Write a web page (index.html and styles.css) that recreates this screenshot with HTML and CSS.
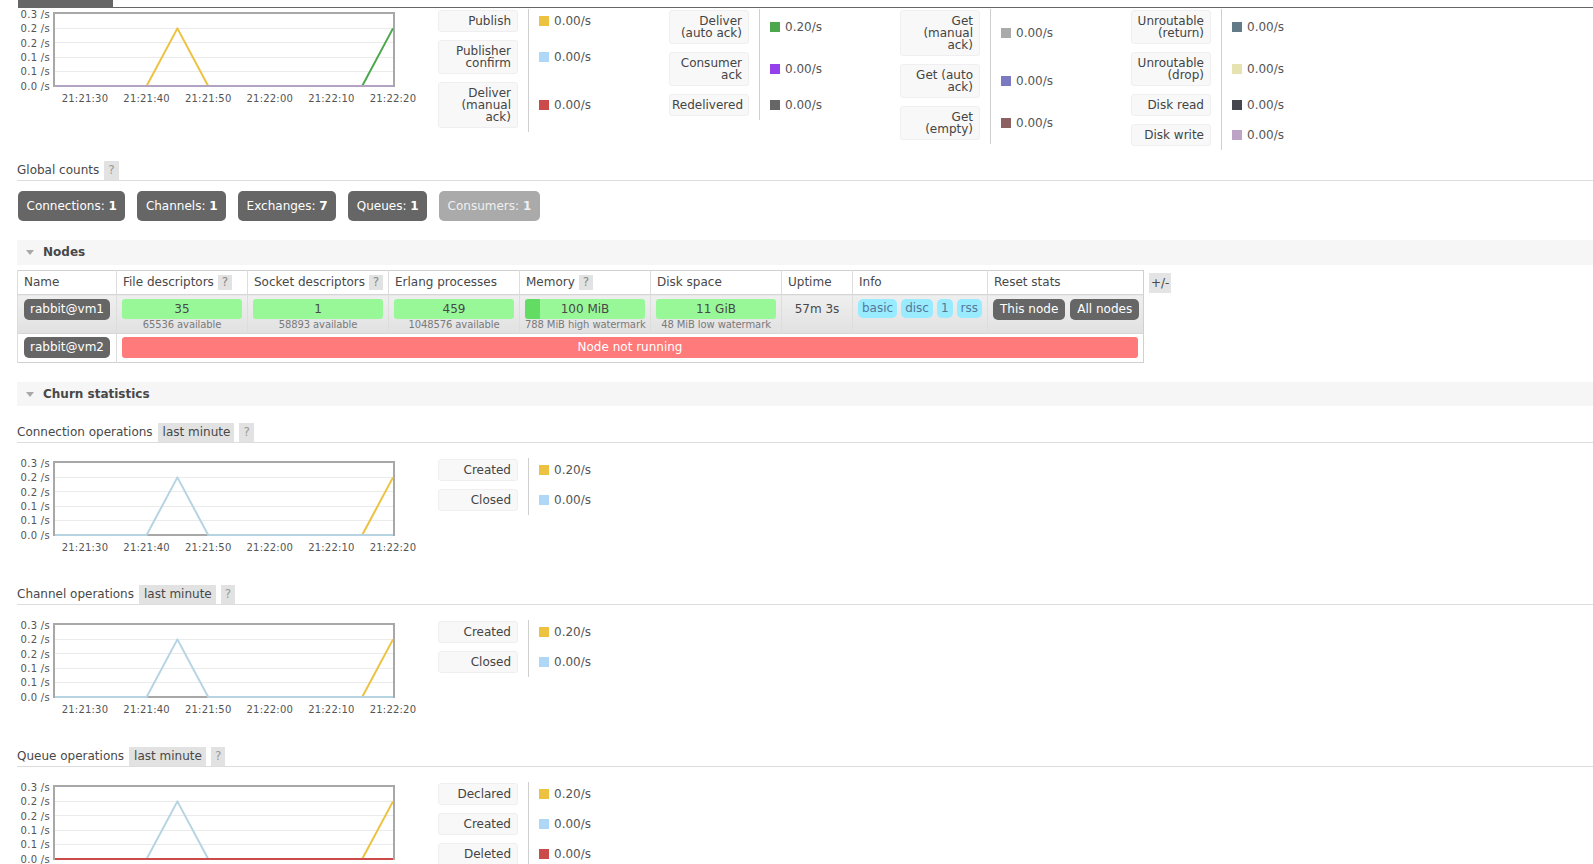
FILE: index.html
```html
<!DOCTYPE html>
<html>
<head>
<meta charset="utf-8">
<title>RabbitMQ Management</title>
<link rel="stylesheet" href="styles.css">
</head>
<body>
<div class="main">
  <div class="tabs"><div class="tab"></div></div>

  <div class="box">
    <svg class="chart" width="405" height="100" viewBox="0 0 405 100">
      <rect x="37" y="5" width="340" height="73" class="plot-bg"/>
      <g class="grid">
        <line x1="38" y1="20.5" x2="376" y2="20.5"/>
        <line x1="38" y1="34.5" x2="376" y2="34.5"/>
        <line x1="38" y1="49.5" x2="376" y2="49.5"/>
        <line x1="38" y1="63.5" x2="376" y2="63.5"/>
      </g>
      <rect x="37" y="5" width="340" height="73" class="plot-border"/>
      <g class="ylab">
        <text x="33" y="9.5">0.3 /s</text>
        <text x="33" y="24">0.2 /s</text>
        <text x="33" y="38.5">0.2 /s</text>
        <text x="33" y="53">0.1 /s</text>
        <text x="33" y="67">0.1 /s</text>
        <text x="33" y="81.5">0.0 /s</text>
      </g>
      <g class="xlab">
        <text x="68" y="93.5">21:21:30</text>
        <text x="129.6" y="93.5">21:21:40</text>
        <text x="191.2" y="93.5">21:21:50</text>
        <text x="252.8" y="93.5">21:22:00</text>
        <text x="314.4" y="93.5">21:22:10</text>
        <text x="376" y="93.5">21:22:20</text>
      </g>
      <polyline class="s s-yellow" points="129.6,78 160.4,20.4 191.2,78"/>
      <polyline class="s s-green" points="345.2,78 376,20.4"/>
      <polyline class="s s-diskwrite" points="38,78 376,78"/>
    </svg>
    <div class="legends">
      <div class="legend">
        <div class="sep sep3"></div>
        <div class="lab">Publish</div>
        <div class="val"><span class="sw c-yellow"></span>0.00/s</div>
        <div class="lab">Publisher<br>confirm</div>
        <div class="val"><span class="sw c-lblue"></span>0.00/s</div>
        <div class="lab">Deliver<br>(manual<br>ack)</div>
        <div class="val"><span class="sw c-red"></span>0.00/s</div>
      </div>
      <div class="legend">
        <div class="sep sep3"></div>
        <div class="lab">Deliver<br>(auto ack)</div>
        <div class="val"><span class="sw c-green"></span>0.20/s</div>
        <div class="lab">Consumer<br>ack</div>
        <div class="val"><span class="sw c-purple"></span>0.00/s</div>
        <div class="lab">Redelivered</div>
        <div class="val"><span class="sw c-dgray"></span>0.00/s</div>
      </div>
      <div class="legend">
        <div class="sep sep3"></div>
        <div class="lab">Get<br>(manual<br>ack)</div>
        <div class="val"><span class="sw c-lgray"></span>0.00/s</div>
        <div class="lab">Get (auto<br>ack)</div>
        <div class="val"><span class="sw c-violet"></span>0.00/s</div>
        <div class="lab">Get<br>(empty)</div>
        <div class="val"><span class="sw c-brown"></span>0.00/s</div>
      </div>
      <div class="legend">
        <div class="sep sep4"></div>
        <div class="lab">Unroutable<br>(return)</div>
        <div class="val"><span class="sw c-slate"></span>0.00/s</div>
        <div class="lab">Unroutable<br>(drop)</div>
        <div class="val"><span class="sw c-pale"></span>0.00/s</div>
        <div class="lab">Disk read</div>
        <div class="val"><span class="sw c-dark"></span>0.00/s</div>
        <div class="lab">Disk write</div>
        <div class="val"><span class="sw c-lilac"></span>0.00/s</div>
      </div>
    </div>
  </div>

  <h3 class="h-global"><span class="title">Global counts</span><span class="help">?</span></h3>

  <div class="counts">
    <span class="count">Connections: <b>1</b></span>
    <span class="count">Channels: <b>1</b></span>
    <span class="count">Exchanges: <b>7</b></span>
    <span class="count">Queues: <b>1</b></span>
    <span class="count off">Consumers: <b>1</b></span>
  </div>

  <div class="section sec-nodes"><span class="tri"></span>Nodes</div>

  <div class="nodes">
    <table class="list">
      <colgroup>
        <col class="w-name"><col class="w-fd"><col class="w-sd"><col class="w-ep"><col class="w-mem"><col class="w-disk"><col class="w-up"><col class="w-info"><col class="w-reset">
      </colgroup>
      <thead>
        <tr>
          <th>Name</th>
          <th>File descriptors <span class="help">?</span></th>
          <th>Socket descriptors <span class="help">?</span></th>
          <th>Erlang processes</th>
          <th>Memory <span class="help">?</span></th>
          <th>Disk space</th>
          <th>Uptime</th>
          <th>Info</th>
          <th>Reset stats</th>
        </tr>
      </thead>
      <tbody>
        <tr class="alt1">
          <td><span class="node">rabbit@vm1</span></td>
          <td><div class="bar">35</div><div class="sub">65536 available</div></td>
          <td><div class="bar">1</div><div class="sub">58893 available</div></td>
          <td><div class="bar">459</div><div class="sub">1048576 available</div></td>
          <td><div class="bar mem">100 MiB</div><div class="sub">788 MiB high watermark</div></td>
          <td><div class="bar">11 GiB</div><div class="sub">48 MiB low watermark</div></td>
          <td class="center"><div class="uptime">57m 3s</div></td>
          <td><div class="badges"><span class="badge">basic</span><span class="badge">disc</span><span class="badge">1</span><span class="badge">rss</span></div></td>
          <td><div class="btns"><span class="btn">This node</span><span class="btn">All nodes</span></div></td>
        </tr>
        <tr class="alt2">
          <td><span class="node">rabbit@vm2</span></td>
          <td colspan="8"><div class="bar red">Node not running</div></td>
        </tr>
      </tbody>
    </table>
    <span class="pm">+/-</span>
  </div>

  <div class="section sec-churn"><span class="tri"></span>Churn statistics</div>

  <h3 class="h-sub first"><span class="title">Connection operations</span><span class="period">last minute</span><span class="help">?</span></h3>
  <div class="box sub-box">
    <svg class="chart" width="405" height="100" viewBox="0 0 405 100">
      <rect x="37" y="5" width="340" height="73" class="plot-bg"/>
      <g class="grid">
        <line x1="38" y1="20.5" x2="376" y2="20.5"/>
        <line x1="38" y1="34.5" x2="376" y2="34.5"/>
        <line x1="38" y1="49.5" x2="376" y2="49.5"/>
        <line x1="38" y1="63.5" x2="376" y2="63.5"/>
      </g>
      <rect x="37" y="5" width="340" height="73" class="plot-border"/>
      <g class="ylab">
        <text x="33" y="9.5">0.3 /s</text>
        <text x="33" y="24">0.2 /s</text>
        <text x="33" y="38.5">0.2 /s</text>
        <text x="33" y="53">0.1 /s</text>
        <text x="33" y="67">0.1 /s</text>
        <text x="33" y="81.5">0.0 /s</text>
      </g>
      <g class="xlab">
        <text x="68" y="93.5">21:21:30</text>
        <text x="129.6" y="93.5">21:21:40</text>
        <text x="191.2" y="93.5">21:21:50</text>
        <text x="252.8" y="93.5">21:22:00</text>
        <text x="314.4" y="93.5">21:22:10</text>
        <text x="376" y="93.5">21:22:20</text>
      </g>
      <polyline class="s s-yellow" points="345.2,78 376,20.4"/>
      <polyline class="s s-lblue" points="38,78 129.6,78 160.4,20.4 191.2,78 376,78"/>
    </svg>
    <div class="legends">
      <div class="legend">
        <div class="sep sep2"></div>
        <div class="lab">Created</div>
        <div class="val"><span class="sw c-yellow"></span>0.20/s</div>
        <div class="lab">Closed</div>
        <div class="val"><span class="sw c-lblue"></span>0.00/s</div>
      </div>
    </div>
  </div>

  <h3 class="h-sub"><span class="title">Channel operations</span><span class="period">last minute</span><span class="help">?</span></h3>
  <div class="box sub-box">
    <svg class="chart" width="405" height="100" viewBox="0 0 405 100">
      <rect x="37" y="5" width="340" height="73" class="plot-bg"/>
      <g class="grid">
        <line x1="38" y1="20.5" x2="376" y2="20.5"/>
        <line x1="38" y1="34.5" x2="376" y2="34.5"/>
        <line x1="38" y1="49.5" x2="376" y2="49.5"/>
        <line x1="38" y1="63.5" x2="376" y2="63.5"/>
      </g>
      <rect x="37" y="5" width="340" height="73" class="plot-border"/>
      <g class="ylab">
        <text x="33" y="9.5">0.3 /s</text>
        <text x="33" y="24">0.2 /s</text>
        <text x="33" y="38.5">0.2 /s</text>
        <text x="33" y="53">0.1 /s</text>
        <text x="33" y="67">0.1 /s</text>
        <text x="33" y="81.5">0.0 /s</text>
      </g>
      <g class="xlab">
        <text x="68" y="93.5">21:21:30</text>
        <text x="129.6" y="93.5">21:21:40</text>
        <text x="191.2" y="93.5">21:21:50</text>
        <text x="252.8" y="93.5">21:22:00</text>
        <text x="314.4" y="93.5">21:22:10</text>
        <text x="376" y="93.5">21:22:20</text>
      </g>
      <polyline class="s s-yellow" points="345.2,78 376,20.4"/>
      <polyline class="s s-lblue" points="38,78 129.6,78 160.4,20.4 191.2,78 376,78"/>
    </svg>
    <div class="legends">
      <div class="legend">
        <div class="sep sep2"></div>
        <div class="lab">Created</div>
        <div class="val"><span class="sw c-yellow"></span>0.20/s</div>
        <div class="lab">Closed</div>
        <div class="val"><span class="sw c-lblue"></span>0.00/s</div>
      </div>
    </div>
  </div>

  <h3 class="h-sub"><span class="title">Queue operations</span><span class="period">last minute</span><span class="help">?</span></h3>
  <div class="box sub-box">
    <svg class="chart" width="405" height="100" viewBox="0 0 405 100">
      <rect x="37" y="5" width="340" height="73" class="plot-bg"/>
      <g class="grid">
        <line x1="38" y1="20.5" x2="376" y2="20.5"/>
        <line x1="38" y1="34.5" x2="376" y2="34.5"/>
        <line x1="38" y1="49.5" x2="376" y2="49.5"/>
        <line x1="38" y1="63.5" x2="376" y2="63.5"/>
      </g>
      <rect x="37" y="5" width="340" height="73" class="plot-border"/>
      <g class="ylab">
        <text x="33" y="9.5">0.3 /s</text>
        <text x="33" y="24">0.2 /s</text>
        <text x="33" y="38.5">0.2 /s</text>
        <text x="33" y="53">0.1 /s</text>
        <text x="33" y="67">0.1 /s</text>
        <text x="33" y="81.5">0.0 /s</text>
      </g>
      <g class="xlab">
        <text x="68" y="93.5">21:21:30</text>
        <text x="129.6" y="93.5">21:21:40</text>
        <text x="191.2" y="93.5">21:21:50</text>
        <text x="252.8" y="93.5">21:22:00</text>
        <text x="314.4" y="93.5">21:22:10</text>
        <text x="376" y="93.5">21:22:20</text>
      </g>
      <polyline class="s s-yellow" points="345.2,78 376,20.4"/>
      <polyline class="s s-lblue" points="129.6,78 160.4,20.4 191.2,78"/>
      <polyline class="s s-red" points="38,78 376,78"/>
    </svg>
    <div class="legends">
      <div class="legend">
        <div class="sep sep3"></div>
        <div class="lab">Declared</div>
        <div class="val"><span class="sw c-yellow"></span>0.20/s</div>
        <div class="lab">Created</div>
        <div class="val"><span class="sw c-lblue"></span>0.00/s</div>
        <div class="lab">Deleted</div>
        <div class="val"><span class="sw c-red"></span>0.00/s</div>
      </div>
    </div>
  </div>
</div>
</body>
</html>
```

FILE: styles.css
```css
* { box-sizing: border-box; }
html, body { margin: 0; padding: 0; background: #fff; }
body {
  font-family: "DejaVu Sans", Verdana, sans-serif;
  font-size: 12px;
  line-height: 1.2;
  color: #484848;
  overflow: hidden;
}
.main { padding-left: 17px; }

/* top tab strip */
.tabs { height: 8px; margin-left: 1px; border-bottom: 1px solid #666; }
.tabs .tab { width: 95px; height: 7px; background: #666; }

/* chart + legend box */
.box { display: flex; align-items: flex-start; }
.sub-box { margin-top: 14px; margin-bottom: 28px; }
.chart { display: block; flex: none; width: 405px; height: 100px; margin-right: 16px; }
.chart .plot-bg { fill: #fff; }
.chart .plot-border { fill: none; stroke: #a8a8a8; stroke-width: 2; }
.chart .grid line { stroke: #ebebeb; stroke-width: 1; }
.chart text { font-family: "DejaVu Sans", Verdana, sans-serif; font-size: 10px; fill: #545454; }
.chart .ylab text { text-anchor: end; letter-spacing: 0.3px; }
.chart .xlab text { text-anchor: middle; letter-spacing: 0.2px; }
.chart .s { fill: none; stroke-width: 2; stroke-linejoin: round; }
.s-yellow { stroke: #edc240; }
.s-green { stroke: #4da74d; }
.s-lblue { stroke: #b7d4e2; }
.s-red { stroke: #cb4b4b; }
.s-diskwrite { stroke: #b3a3c3; }

.legends { display: flex; margin-top: 2px; }
.legend {
  display: grid;
  grid-template-columns: 80px 1px 130px;
  column-gap: 10px;
  row-gap: 8px;
  width: 231px;
  align-content: start;
}
.legend .sep { grid-column: 2; background: #cfcfcf; margin: -1px 0 -4px; }
.legend .sep2 { grid-row: 1 / span 2; }
.legend .sep3 { grid-row: 1 / span 3; }
.legend .sep4 { grid-row: 1 / span 4; }
.legend .lab {
  grid-column: 1;
  background: #f8f8f8;
  border: 1px solid #efefef;
  border-radius: 3px;
  padding: 4px 6px 4px 2px;
  line-height: 12px;
  text-align: right;
  white-space: nowrap;
  color: #444;
}
.legend .val {
  grid-column: 3;
  align-self: center;
  display: flex;
  align-items: center;
  gap: 5px;
  color: #555;
}
.sw { display: inline-block; width: 10px; height: 10px; flex: none; }
.c-yellow { background: #edc240; }
.c-lblue { background: #afd8f8; }
.c-red { background: #cb4b4b; }
.c-green { background: #4da74d; }
.c-purple { background: #9440ed; }
.c-dgray { background: #666666; }
.c-lgray { background: #aaaaaa; }
.c-violet { background: #7c79c3; }
.c-brown { background: #8c6161; }
.c-slate { background: #637b88; }
.c-pale { background: #e6e3b0; }
.c-dark { background: #46464f; }
.c-lilac { background: #bda4c6; }

/* headings */
h3 {
  display: flex;
  margin: 0;
  height: 20px;
  font-size: 12px;
  font-weight: normal;
  line-height: 19px;
  border-bottom: 1px solid #dddddd;
}
h3 .help, h3 .period { background: #e2e2e2; margin-left: 5px; }
h3 .help { padding: 0 4px; color: #999; }
h3 .period { padding: 0 4px 0 5px; }
.h-global { margin-top: 15px; }
.h-sub.first { margin-top: 17px; }

/* global counts */
.counts { display: flex; gap: 12px; margin-top: 10px; margin-left: 1px; }
.count {
  background: #666;
  color: #fff;
  padding: 8px 8.5px;
  line-height: 14px;
  border-radius: 5px;
}
.count.off { background: #aaa; color: #f0f0f0; }

/* section bands */
.section {
  display: flex;
  align-items: center;
  height: 25px;
  padding-left: 9px;
  background: #f6f6f6;
  font-weight: bold;
  color: #484848;
}
.section .tri {
  width: 0; height: 0;
  border-left: 4px solid transparent;
  border-right: 4px solid transparent;
  border-top: 5px solid #a8a8a8;
  margin-right: 9px;
}
.sec-nodes { margin-top: 19px; }
.sec-churn { margin-top: 19px; height: 24px; }

/* nodes table */
.nodes { display: flex; align-items: flex-start; gap: 5px; margin-top: 5px; }
table.list {
  border-collapse: collapse;
  table-layout: fixed;
  width: 1126px;
  border: 1px solid #d0d0d0;
}
.w-name { width: 99px; }
.w-fd { width: 131px; }
.w-sd { width: 141px; }
.w-ep { width: 131px; }
.w-mem { width: 131px; }
.w-disk { width: 131px; }
.w-up { width: 71px; }
.w-info { width: 135px; }
.w-reset { width: 156px; }
table.list th {
  text-align: left;
  font-weight: normal;
  padding: 4px 5px 4px 6px;
  height: 23px;
  line-height: 15px;
  border-left: 1px solid #dddddd;
  background: #fff;
  white-space: nowrap;
}
table.list th .help {
  display: inline-block;
  vertical-align: top;
  background: #e2e2e2;
  color: #888;
  padding: 0 4px;
  line-height: 15px;
}
table.list td {
  vertical-align: top;
  border-left: 1px solid #dddddd;
  border-top: 1px solid #d6d6d6;
}
tr.alt1 td { background: linear-gradient(#efefef, #e1e1e1); padding: 4px 5px 2px; }
tr.alt2 td { background: #fff; padding: 3px 5px 4px; }
table.list td:first-child { padding-left: 6px; }
.node {
  display: inline-block;
  vertical-align: top;
  background: #666;
  color: #fff;
  border-radius: 5px;
  padding: 0 6px;
  line-height: 21px;
  white-space: nowrap;
}
.bar {
  height: 20px;
  line-height: 20px;
  text-align: center;
  background: #98f898;
  border-radius: 3px;
  color: #484848;
}
.bar.mem { background: linear-gradient(to right, #62dc62 15px, #98f898 15px); }
.bar.red { height: 21px; line-height: 21px; background: #ff7a7a; color: #fff; }
.sub {
  font-size: 10px;
  line-height: 12px;
  color: #7a7a7a;
  text-align: center;
  white-space: nowrap;
  letter-spacing: -0.1px;
}
.center { text-align: center; }
.uptime { line-height: 20px; }
.badges { display: flex; gap: 4px; }
.badge {
  flex: none;
  background: #99ebff;
  color: #54789a;
  border-radius: 5px;
  padding: 0 4px;
  line-height: 19px;
  white-space: nowrap;
}
.btns { display: flex; gap: 5px; }
.btn {
  flex: none;
  background: #666;
  color: #fff;
  border-radius: 5px;
  padding: 0 7px;
  line-height: 21px;
  white-space: nowrap;
}
.pm {
  margin-top: 3px;
  background: #e4e4e4;
  padding: 0 2px;
  line-height: 20px;
  color: #484848;
}
```
